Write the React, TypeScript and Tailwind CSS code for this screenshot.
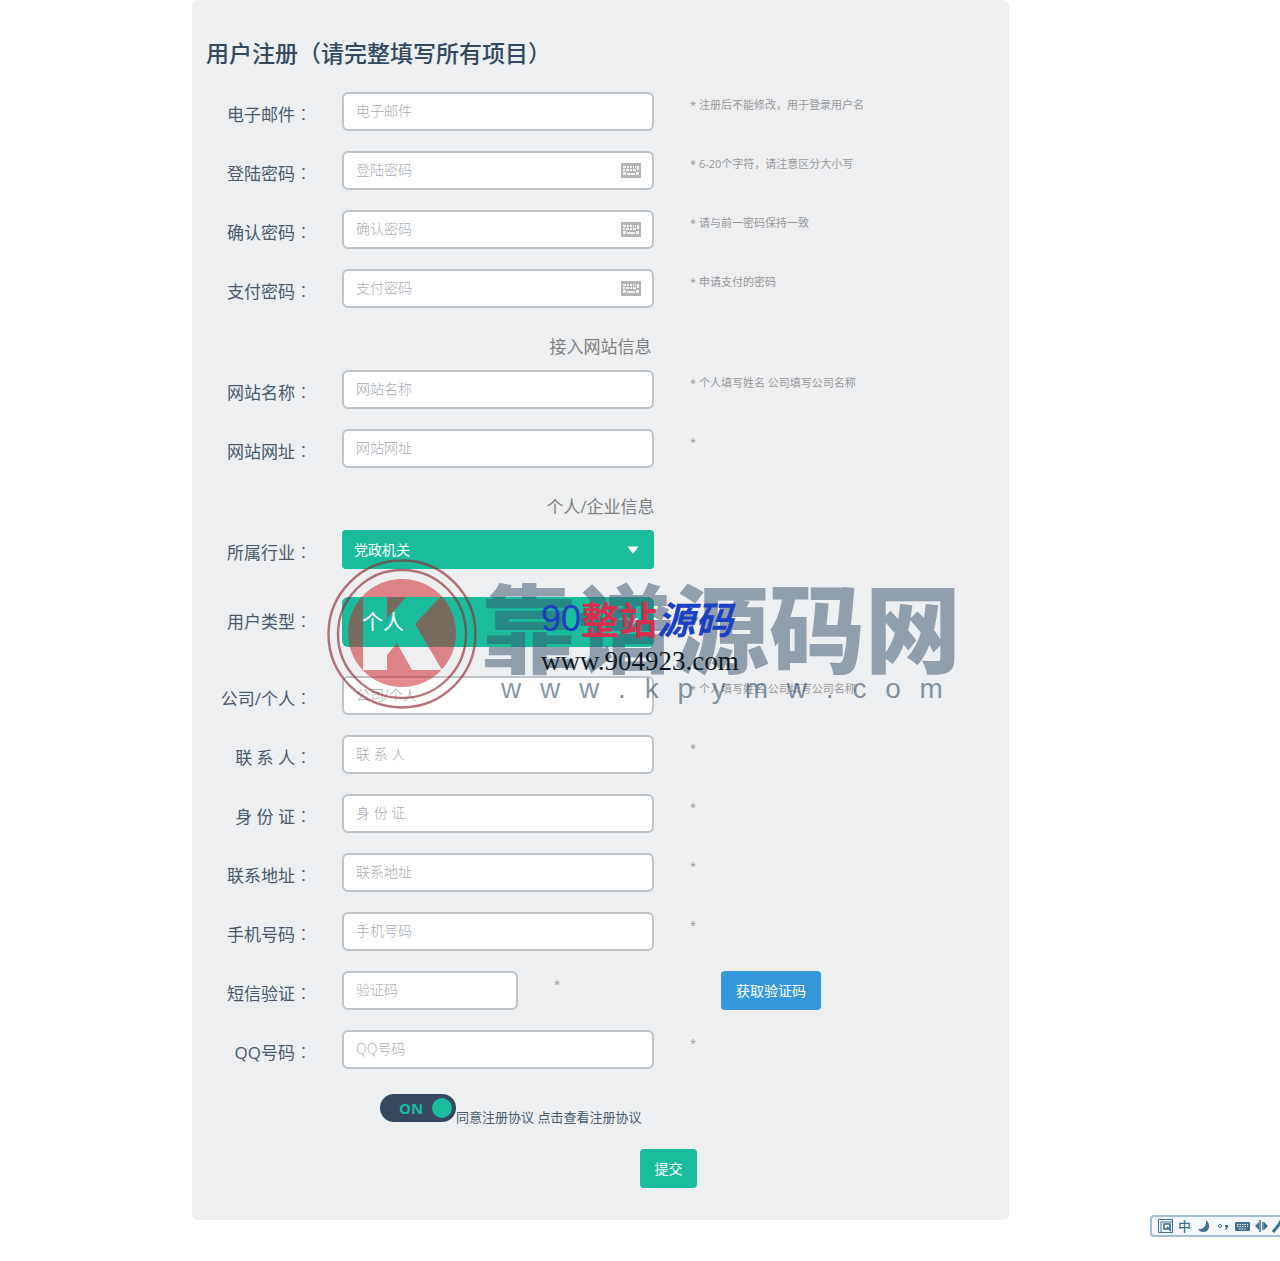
import { useState } from 'react';
import type { ReactNode } from 'react';

type RowProps = {
  id: string;
  label: string;
  hint?: string;
  tall?: boolean;
  children: ReactNode;
};

function Row({ id, label, hint, tall, children }: RowProps) {
  return (
    <div className="flex items-start">
      <label
        htmlFor={id}
        className={`w-[120px] shrink-0 text-right text-[17px] leading-6 text-[#4a5a6c] ${tall ? 'pt-3' : 'pt-[10px]'}`}
      >
        {label}
        <span className="font-['Noto_Sans_CJK_TC',sans-serif] font-light">：</span>
      </label>
      <div className="ml-[30px] flex items-start">{children}</div>
      {hint && <p className="ml-9 pt-[5px] text-[11px] leading-4 text-[#999]">{hint}</p>}
    </div>
  );
}

function KeyboardIcon() {
  return (
    <svg viewBox="0 0 20 15" className="pointer-events-none absolute top-3 right-[13px] h-[15px] w-5" aria-hidden="true">
      <rect width="20" height="15" fill="#b4b4b4" />
      <path
        d="M2 3h3v2H2zM6 3h2v2H6zM9 3h2v2H9zM12 3h1v2h-1zM14 3h1v2h-1zM16 3h2v4h-2zM2 6h2v2H2zM5 6h3v2H5zM9 6h2v2H9zM12 6h3v2h-3zM2 9h3v3H2zM6 10h8v2H6zM15 9h3v3h-3z"
        fill="#f4f4f4"
      />
    </svg>
  );
}

type FieldProps = {
  id: string;
  label: string;
  hint?: string;
  password?: boolean;
};

function Field({ id, label, hint, password }: FieldProps) {
  return (
    <Row id={id} label={label} hint={hint}>
      <div className="relative">
        <input
          id={id}
          type={password ? 'password' : 'text'}
          placeholder={label}
          className="block h-[39px] w-[312px] rounded-md border-2 border-[#bdc3c7] bg-white px-3 pb-[2px] text-sm text-[#34495e] placeholder:font-light placeholder:text-[#a8adb2]"
        />
        {password && <KeyboardIcon />}
      </div>
    </Row>
  );
}

function Caret() {
  return (
    <svg viewBox="0 0 12 8" className="pointer-events-none absolute top-1/2 right-[15px] h-2 w-3 -translate-y-1/2" aria-hidden="true">
      <path d="M0.5 0.5h11L6 8z" fill="#fff" />
    </svg>
  );
}

const accountFields: FieldProps[] = [
  { id: 'email', label: '电子邮件', hint: '* 注册后不能修改，用于登录用户名' },
  { id: 'password', label: '登陆密码', hint: '* 6-20个字符，请注意区分大小写', password: true },
  { id: 'confirm', label: '确认密码', hint: '* 请与前一密码保持一致', password: true },
  { id: 'payPassword', label: '支付密码', hint: '* 申请支付的密码', password: true },
];

const siteFields: FieldProps[] = [
  { id: 'siteName', label: '网站名称', hint: '* 个人填写姓名 公司填写公司名称' },
  { id: 'siteUrl', label: '网站网址', hint: '*' },
];

const personFields: FieldProps[] = [
  { id: 'company', label: '公司/个人', hint: '* 个人填写姓名 公司填写公司名称' },
  { id: 'contact', label: '联 系 人', hint: '*' },
  { id: 'idCard', label: '身 份 证', hint: '*' },
  { id: 'address', label: '联系地址', hint: '*' },
  { id: 'mobile', label: '手机号码', hint: '*' },
];

function SectionTitle({ children }: { children: ReactNode }) {
  return <h2 className="mt-[27px] mb-[11px] text-center text-[17px] leading-6 text-[#7f7f7f]">{children}</h2>;
}

function Watermark() {
  return (
    <div className="pointer-events-none absolute top-[559px] left-[135px] h-[150px] w-[630px]">
      <svg viewBox="0 0 150 150" className="absolute top-0 left-0 h-[150px] w-[150px]" aria-hidden="true">
        <g fill="none" stroke="#8f2a32" strokeOpacity="0.65" strokeWidth="2.4">
          <circle cx="75" cy="75" r="73.500" />
          <circle cx="75" cy="75" r="64" />
        </g>
        <path
          fillRule="evenodd"
          d="M75 20a54 54 0 1 0 0 108a54 54 0 1 0 0-108zM36 38h24v22l19-22h34L88 65l27 46H85L70 84L60 96v15H36z"
          fill="#ce2029"
          fillOpacity="0.52"
        />
      </svg>
      <p className="absolute top-3 left-[154px] font-['Noto_Sans_CJK_SC',sans-serif] text-[96px] leading-[106px] font-black whitespace-nowrap text-[#354f69]/50">
        靠谱源码网
      </p>
      <p className="absolute top-[114px] left-[174px] flex w-[442px] justify-between font-['Liberation_Sans',sans-serif] text-[28px] leading-8 text-[#354f69]/60">
        {'www.kpymw.com'.split('').map((char, i) => (
          <span key={i}>{char}</span>
        ))}
      </p>
      <p className="absolute top-[34px] left-[214px] flex items-center leading-[52px] whitespace-nowrap text-[#1a41c4]">
        <span className="font-['Liberation_Sans',sans-serif] text-[36px]">90</span>
        <span className="text-[38px] font-bold text-[#d5304f]">整站</span>
        <span className="text-[38px] font-bold italic">源码</span>
      </p>
      <p className="absolute top-[86px] left-[214px] font-['Liberation_Serif',serif] text-[27px] leading-8 text-[#101820]">
        www.904923.com
      </p>
    </div>
  );
}

function InputMethodBar() {
  return (
    <div className="absolute right-0 bottom-6 flex h-[22px] w-[130px] items-center overflow-hidden rounded-l-sm border-2 border-r-0 border-[#a5bcd6] bg-[#f4f8fc] pl-[6px] text-[#42708f]">
      <svg viewBox="0 0 15 18" className="h-[18px] w-[15px] shrink-0" fill="none" stroke="currentColor" aria-hidden="true">
        <path d="M0.500 2.500h14v13H0.500zM3 5v10M3 5h11" />
        <path d="M6 7h6v5H6zM9 10l4 4" strokeWidth="1.700" />
      </svg>
      <span className="ml-[5px] text-[13px] leading-[18px] font-medium">中</span>
      <svg viewBox="0 0 82 18" className="ml-[7px] h-[18px] w-[82px] shrink-0" aria-hidden="true">
        <path d="M8 3c5 4 4 12-3 12c-2 0-4-1-5-3c5 1 9-3 8-9z" fill="#42708f" />
        <circle cx="22" cy="9" r="1.500" fill="none" stroke="#42708f" />
        <path d="M27 8h3v2l-2 3h-1l1-3h-1z" fill="#42708f" />
        <rect x="37" y="5" width="15" height="9" rx="1" fill="#42708f" />
        <path d="M39 7.500h11M39 9.500h11M41 12h7" stroke="#f4f8fc" strokeDasharray="1.500 1" />
        <path d="M57 9l4-4v8zM70 9l-4-4v8z" fill="#42708f" />
        <path d="M62 3v12M65 5v8" stroke="#42708f" strokeWidth="1.500" />
        <path d="M75 15l5-6l3-5" fill="none" stroke="#42708f" strokeWidth="3" />
      </svg>
    </div>
  );
}

export default function App() {
  const [agreed, setAgreed] = useState(true);
  const [industry, setIndustry] = useState('党政机关');
  const [userType, setUserType] = useState('个人');

  return (
    <main className="relative min-h-screen overflow-hidden bg-white font-['Open_Sans','Noto_Sans_CJK_SC',sans-serif]">
      <form
        className="relative ml-[15%] w-[63.8%] min-w-[817px] rounded-md bg-[#edeff1] pt-[37px] pb-8"
        onSubmit={(e) => e.preventDefault()}
      >
        <h1 className="mb-[23px] pl-[14px] text-[23px] leading-8 font-medium text-[#34495e]">用户注册（请完整填写所有项目）</h1>

        <div className="flex flex-col gap-5">
          {accountFields.map((field) => (
            <Field key={field.id} {...field} />
          ))}
        </div>

        <SectionTitle>接入网站信息</SectionTitle>
        <div className="flex flex-col gap-5">
          {siteFields.map((field) => (
            <Field key={field.id} {...field} />
          ))}
        </div>

        <SectionTitle>个人/企业信息</SectionTitle>
        <div className="mb-[29px] flex flex-col gap-7">
          <Row id="industry" label="所属行业">
            <div className="relative">
              <select
                id="industry"
                value={industry}
                onChange={(e) => setIndustry(e.target.value)}
                className="block h-[39px] w-[312px] appearance-none rounded bg-[#1abc9c] px-3 text-sm text-white"
              >
                <option>党政机关</option>
              </select>
              <Caret />
            </div>
          </Row>
          <Row id="userType" label="用户类型" tall>
            <div className="relative">
              <select
                id="userType"
                value={userType}
                onChange={(e) => setUserType(e.target.value)}
                className="block h-[50px] w-[312px] appearance-none rounded-md bg-[#1abc9c] px-5 text-[21px] text-white"
              >
                <option>个人</option>
                <option>公司</option>
              </select>
              <Caret />
            </div>
          </Row>
        </div>

        <div className="flex flex-col gap-5">
          {personFields.map((field) => (
            <Field key={field.id} {...field} />
          ))}
          <Row id="sms" label="短信验证">
            <input
              id="sms"
              type="text"
              placeholder="验证码"
              className="block h-[39px] w-[176px] rounded-md border-2 border-[#bdc3c7] bg-white px-3 pb-[2px] text-sm text-[#34495e] placeholder:font-light placeholder:text-[#a8adb2]"
            />
            <p className="ml-9 w-[131px] pt-[5px] text-[11px] leading-4 text-[#999]">*</p>
            <button type="button" className="ml-9 h-[39px] w-[100px] rounded bg-[#3498db] text-sm text-white">
              获取验证码
            </button>
          </Row>
          <Field id="qq" label="QQ号码" hint="*" />
        </div>

        <div className="mt-[25px] flex items-start pl-[188px]">
          <label className="relative block h-7 w-[76px] cursor-pointer rounded-full bg-[#34495e]">
            <input
              type="checkbox"
              aria-label="同意注册协议"
              checked={agreed}
              onChange={(e) => setAgreed(e.target.checked)}
              className="peer sr-only"
            />
            <span className="absolute left-[19px] text-[15px] leading-7 font-bold text-[#1abc9c]">{agreed ? 'ON' : 'OFF'}</span>
            <span className="absolute top-1 left-1 size-5 rounded-full bg-[#7f8c9a] peer-checked:left-[52px] peer-checked:bg-[#1abc9c]" />
          </label>
          <p className="pt-[14px] text-[13px] leading-[18px] text-[#4a5a6c]">
            同意注册协议 <a href="#agreement">点击查看注册协议</a>
          </p>
        </div>

        <button type="submit" className="mt-[23px] ml-[448px] block h-[39px] w-[57px] rounded bg-[#1abc9c] text-sm text-white">
          提交
        </button>

        <Watermark />
      </form>

      <InputMethodBar />
    </main>
  );
}
